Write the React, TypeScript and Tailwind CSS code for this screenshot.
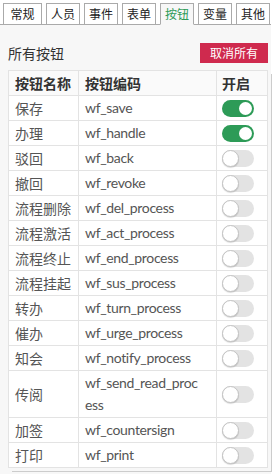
const tabs = ["常规", "人员", "事件", "表单", "按钮", "变量", "其他"];

const buttons: { name: string; code: string; on: boolean }[] = [
  { name: "保存", code: "wf_save", on: true },
  { name: "办理", code: "wf_handle", on: true },
  { name: "驳回", code: "wf_back", on: false },
  { name: "撤回", code: "wf_revoke", on: false },
  { name: "流程删除", code: "wf_del_process", on: false },
  { name: "流程激活", code: "wf_act_process", on: false },
  { name: "流程终止", code: "wf_end_process", on: false },
  { name: "流程挂起", code: "wf_sus_process", on: false },
  { name: "转办", code: "wf_turn_process", on: false },
  { name: "催办", code: "wf_urge_process", on: false },
  { name: "知会", code: "wf_notify_process", on: false },
  { name: "传阅", code: "wf_send_read_process", on: false },
  { name: "加签", code: "wf_countersign", on: false },
  { name: "打印", code: "wf_print", on: false },
];

function Toggle({ on }: { on: boolean }) {
  if (on) {
    return (
      <div className="w-[32px] h-[17px] rounded-full bg-[#2d9b57] flex items-center justify-end pr-[2px]">
        <div className="w-[13px] h-[13px] rounded-full bg-white" />
      </div>
    );
  }
  return (
    <div className="w-[32px] h-[17px] rounded-full bg-[#e3e3e3] flex items-center">
      <div className="w-[17px] h-[17px] rounded-full bg-white border border-[#c4c4c4] shadow-[0_1px_1px_rgba(0,0,0,0.15)]" />
    </div>
  );
}

export default function App() {
  return (
    <div className="w-[275px] h-[474px] bg-white overflow-hidden font-['Noto_Sans_CJK_SC',sans-serif]">
      <div className="flex gap-[4px] pl-[3px] pt-[3px] w-[271px] border-b border-[#aaa]">
        {tabs.map((t, i) => (
          <div
            key={t}
            className={
              "h-[22px] -mb-px border border-[#aaa] text-[12px] leading-[20px] flex justify-center " +
              (i === 0 ? "w-[39px] " : "w-[34px] ") +
              (t === "按钮"
                ? "bg-[#f7f7f7] border-b-[#f7f7f7] text-[#2d9b57]"
                : "bg-white text-[#222]")
            }
          >
            {t}
          </div>
        ))}
      </div>
      <div className="w-[271px] h-[449px] bg-[#f7f7f7] pl-[8px] pr-[3px] pt-[18px]">
        <div className="flex items-center justify-between h-[20px]">
          <span className="text-[14px] text-[#333] leading-[20px]">所有按钮</span>
          <button className="h-[20px] px-[10px] bg-[#cf2a4e] text-white text-[12px] leading-[20px]">
            取消所有
          </button>
        </div>
        <table className="mt-[7px] w-[259px] table-fixed border-collapse border border-[#ccc] bg-white text-[14px] text-[#555] shadow-[3px_3px_0_0_#f7f7f7,4px_4px_0_0_#ccc]">
          <colgroup>
            <col className="w-[70px]" />
            <col className="w-[138px]" />
            <col className="w-[51px]" />
          </colgroup>
          <thead>
            <tr className="bg-[#fafafa] text-[#333] font-bold">
              <th className="border border-[#e3e3e3] px-[6px] py-[1px] leading-[22px] text-left">按钮名称</th>
              <th className="border border-[#e3e3e3] px-[6px] py-[1px] leading-[22px] text-left">按钮编码</th>
              <th className="border border-[#e3e3e3] px-[5px] py-[1px] leading-[22px] text-left">开启</th>
            </tr>
          </thead>
          <tbody>
            {buttons.map((b) => (
              <tr key={b.code}>
                <td className="border border-[#e3e3e3] px-[6px] py-[1px] leading-[22px] align-middle">{b.name}</td>
                <td className="border border-[#e3e3e3] pl-[6px] pr-[11.5px] py-[1px] leading-[22px] break-all align-middle tracking-[-0.35px] font-['Lato','Noto_Sans_CJK_SC',sans-serif]">
                  {b.code}
                </td>
                <td className="border border-[#e3e3e3] px-[5px] py-[1px] leading-[22px] align-middle">
                  <Toggle on={b.on} />
                </td>
              </tr>
            ))}
          </tbody>
        </table>
      </div>
    </div>
  );
}
